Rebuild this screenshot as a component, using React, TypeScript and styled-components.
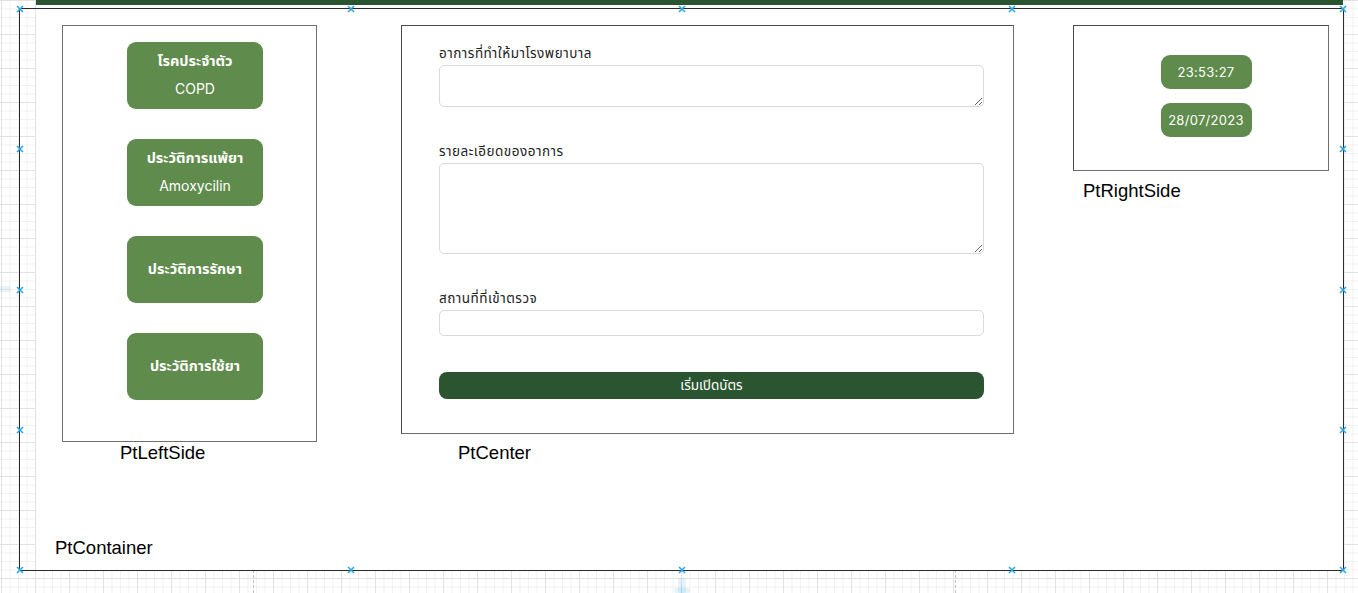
import React from "react";
import styled, { createGlobalStyle } from "styled-components";

const GlobalStyle = createGlobalStyle`
  html, body {
    margin: 0;
    padding: 0;
  }
  body {
    overflow: hidden;
    background-color: #ffffff;
    background-image:
      linear-gradient(#e2e2e2 1px, transparent 1px),
      linear-gradient(90deg, #e2e2e2 1px, transparent 1px),
      linear-gradient(#f1f1f1 1px, transparent 1px),
      linear-gradient(90deg, #f1f1f1 1px, transparent 1px);
    background-size: 34px 34px, 34px 34px, 8.5px 8.5px, 8.5px 8.5px;
    background-position: 1px 0, 1px 0, 1px 0, 1px 0;
    font-family: "Liberation Sans", Arial, sans-serif;
  }
`;

const thai = `"Noto Sans Thai", "Noto Sans", "Liberation Sans", sans-serif`;
const latin = `Inter, "Noto Sans Thai", "Noto Sans", sans-serif`;

const Root = styled.div`
  position: relative;
  width: 1358px;
  height: 593px;
  overflow: hidden;
`;

const PageBreak = styled.div<{ $x: number }>`
  position: absolute;
  top: 0;
  bottom: 0;
  left: ${(p) => p.$x}px;
  border-left: 1px dashed #c2c2c2;
`;

const Sheet = styled.div`
  position: relative;
  margin-left: 36px;
  width: 1307px;
  height: 570px;
  background: #ffffff;
  display: flex;
  flex-direction: column;
`;

const TopBar = styled.div`
  flex: none;
  height: 5px;
  background: #2b5530;
`;

const Columns = styled.div`
  display: flex;
  align-items: flex-start;
  padding: 20px 0 0 26px;
`;

const Column = styled.div<{ $offset: number }>`
  display: flex;
  flex-direction: column;
  margin-left: ${(p) => p.$offset}px;
`;

const Caption = styled.div<{ $indent: number; $top: number }>`
  margin: ${(p) => p.$top}px 0 0 ${(p) => p.$indent}px;
  font-family: "Liberation Sans", Arial, sans-serif;
  font-size: 18.5px;
  line-height: 21px;
  color: #000;
`;

const FooterCaption = styled(Caption)`
  margin-top: auto;
  margin-bottom: 12px;
`;

const Panel = styled.div<{ $w: number; $h: number }>`
  box-sizing: border-box;
  width: ${(p) => p.$w}px;
  height: ${(p) => p.$h}px;
  border: 1px solid #4a4a4a;
  border-right-color: #6e6e6e;
  border-bottom-color: #6e6e6e;
  background: #fff;
`;

const LeftPanel = styled(Panel)`
  display: flex;
  flex-direction: column;
  gap: 30px;
  padding: 16px 0 0 64px;
  border-color: #707070;
`;

const InfoCard = styled.div`
  width: 136px;
  height: 67px;
  border-radius: 9px;
  background: #5f8b4c;
  color: #fff;
  display: flex;
  flex-direction: column;
  align-items: center;
  justify-content: center;
  gap: 7px;
`;

const CardTitle = styled.div`
  font-family: ${thai};
  font-weight: 700;
  font-size: 14.5px;
  line-height: 20px;
`;

const CardValue = styled.div`
  font-family: ${latin};
  font-size: 14px;
  line-height: 20px;
`;

const CenterPanel = styled(Panel)`
  display: flex;
  flex-direction: column;
  gap: 36px;
  padding: 19px 29px 0 37px;
`;

const Field = styled.label`
  display: flex;
  flex-direction: column;
  gap: 2px;
`;

const FieldLabel = styled.span`
  font-family: ${thai};
  font-size: 13.5px;
  letter-spacing: 0.5px;
  line-height: 18px;
  color: #222;
`;

const TextArea = styled.textarea<{ $h: number }>`
  box-sizing: border-box;
  width: 100%;
  height: ${(p) => p.$h}px;
  border: 1px solid #d9d9d9;
  border-radius: 5px;
  background: #fff;
  margin: 0;
  outline: none;
  font-family: ${thai};
`;

const Input = styled.input`
  box-sizing: border-box;
  width: 100%;
  height: 26px;
  border: 1px solid #d9d9d9;
  border-radius: 5px;
  background: #fff;
  margin: 0;
  outline: none;
`;

const SubmitButton = styled.button`
  height: 27px;
  width: 100%;
  border: none;
  border-radius: 8px;
  background: #2b5530;
  color: #fff;
  font-family: ${thai};
  font-size: 13.5px;
  cursor: pointer;
  margin-top: 0;
`;

const RightPanel = styled(Panel)`
  display: flex;
  flex-direction: column;
  align-items: center;
  gap: 14px;
  padding: 29px 0 0 10px;
`;

const Pill = styled.div`
  width: 91px;
  height: 34px;
  border-radius: 9px;
  background: #5f8b4c;
  color: #fff;
  display: flex;
  align-items: center;
  justify-content: center;
  font-family: ${latin};
  font-size: 13px;
  letter-spacing: 0.3px;
`;

const Frame = styled.div`
  position: absolute;
  left: 19px;
  top: 8px;
  width: 1325px;
  height: 563px;
  box-sizing: border-box;
  border: 1px solid #2a2a2a;
  border-right-width: 1.5px;
  pointer-events: none;
`;

const HandleMark = styled.svg<{ $x: number; $y: number }>`
  position: absolute;
  left: calc(${(p) => p.$x}% - 4px);
  top: calc(${(p) => p.$y}% - 4px);
  width: 8px;
  height: 8px;
`;

const Hint = styled.div<{ $x: number; $y: number; $w: number; $h: number }>`
  position: absolute;
  left: ${(p) => p.$x}px;
  top: ${(p) => p.$y}px;
  width: ${(p) => p.$w}px;
  height: ${(p) => p.$h}px;
  background: rgba(41, 168, 224, 0.12);
  border-radius: 2px;
`;

const Handle = ({ x, y }: { x: number; y: number }) => (
  <HandleMark $x={x} $y={y} viewBox="0 0 8 8">
    <path d="M1 1 L7 7 M7 1 L1 7" stroke="#2ba6e6" strokeWidth="1.6" />
  </HandleMark>
);

const stops = [0, 25, 50, 75, 100];

export default function App() {
  return (
    <Root>
      <GlobalStyle />
      <PageBreak $x={253} />
      <PageBreak $x={955} />
      <Hint $x={0} $y={286} $w={11} $h={6} />
      <Hint $x={678} $y={578} $w={8} $h={15} />
      <Hint $x={674} $y={588} $w={16} $h={5} />

      <Sheet>
        <TopBar />
        <Columns>
          <Column $offset={0}>
            <LeftPanel $w={255} $h={417}>
              <InfoCard>
                <CardTitle>โรคประจำตัว</CardTitle>
                <CardValue>COPD</CardValue>
              </InfoCard>
              <InfoCard>
                <CardTitle>ประวัติการแพ้ยา</CardTitle>
                <CardValue>Amoxycilin</CardValue>
              </InfoCard>
              <InfoCard>
                <CardTitle>ประวัติการรักษา</CardTitle>
              </InfoCard>
              <InfoCard>
                <CardTitle>ประวัติการใช้ยา</CardTitle>
              </InfoCard>
            </LeftPanel>
            <Caption $indent={58} $top={0}>PtLeftSide</Caption>
          </Column>

          <Column $offset={84}>
            <CenterPanel $w={613} $h={409}>
              <Field>
                <FieldLabel>อาการที่ทำให้มาโรงพยาบาล</FieldLabel>
                <TextArea $h={42} />
              </Field>
              <Field>
                <FieldLabel>รายละเอียดของอาการ</FieldLabel>
                <TextArea $h={91} />
              </Field>
              <Field>
                <FieldLabel>สถานที่ที่เข้าตรวจ</FieldLabel>
                <Input type="text" />
              </Field>
              <SubmitButton type="button">เริ่มเปิดบัตร</SubmitButton>
            </CenterPanel>
            <Caption $indent={57} $top={8}>PtCenter</Caption>
          </Column>

          <Column $offset={59}>
            <RightPanel $w={256} $h={146}>
              <Pill>23:53:27</Pill>
              <Pill>28/07/2023</Pill>
            </RightPanel>
            <Caption $indent={10} $top={9}>PtRightSide</Caption>
          </Column>
        </Columns>
        <FooterCaption $indent={19} $top={0}>PtContainer</FooterCaption>
      </Sheet>

      <Frame>
        {stops.map((s) => (
          <React.Fragment key={s}>
            <Handle x={s} y={0} />
            <Handle x={s} y={100} />
            {s > 0 && s < 100 && (
              <>
                <Handle x={0} y={s} />
                <Handle x={100} y={s} />
              </>
            )}
          </React.Fragment>
        ))}
      </Frame>
    </Root>
  );
}
